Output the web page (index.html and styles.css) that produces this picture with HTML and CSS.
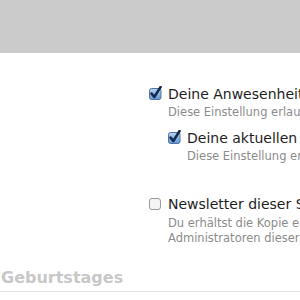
FILE: index.html
```html
<html lang="de">

<head>
	<meta charset="UTF-8" />
	<meta name="viewport" content="width=device-width, initial-scale=1.0" />
	<title>Einstellungen</title>
	<link rel="stylesheet" href="styles.css">
</head>

<body>
	<header class="top-bar"></header>
	<main class="settings">
		<div class="option">
			<svg class="option__box" viewBox="0 0 14 14" width="14" height="14">
				<defs>
					<linearGradient id="boxFill" x1="0" y1="0" x2="0" y2="1">
						<stop offset="0" stop-color="#b9d5f2" />
						<stop offset="1" stop-color="#5e98d6" />
					</linearGradient>
				</defs>
				<rect x="0.5" y="2.5" width="11.5" height="11" rx="2" fill="url(#boxFill)" stroke="#50739f" />
				<path d="M2.6 7.6 L5.3 11 L11.6 1" fill="none" stroke="#16294b" stroke-width="2.5" stroke-linecap="round" stroke-linejoin="round" />
			</svg>
			<div class="option__text">
				<p class="option__title">Deine Anwesenheit im Chat anzeigen</p>
				<p class="option__hint">Diese Einstellung erlaubt anderen Mitgliedern</p>
			</div>
		</div>
		<div class="option option--nested">
			<svg class="option__box" viewBox="0 0 14 14" width="14" height="14">
				<rect x="0.5" y="2.5" width="11.5" height="11" rx="2" fill="url(#boxFill)" stroke="#50739f" />
				<path d="M2.6 7.6 L5.3 11 L11.6 1" fill="none" stroke="#16294b" stroke-width="2.5" stroke-linecap="round" stroke-linejoin="round" />
			</svg>
			<div class="option__text">
				<p class="option__title">Deine aktuellen Aktivitäten anzeigen</p>
				<p class="option__hint">Diese Einstellung erlaubt anderen Mitgliedern</p>
			</div>
		</div>
		<div class="option option--spaced">
			<svg class="option__box" viewBox="0 0 14 14" width="14" height="14">
				<rect x="0.5" y="2.5" width="11" height="11" rx="2.5" fill="#f4f4f4" stroke="#9a9a9a" />
			</svg>
			<div class="option__text">
				<p class="option__title">Newsletter dieser Seite empfangen</p>
				<p class="option__hint option__hint--first">Du erhältst die Kopie einer E-Mail, die die</p>
				<p class="option__hint">Administratoren dieser Seite versenden</p>
			</div>
		</div>
	</main>
	<h2 class="section-title">Geburtstages</h2>
</body>

</html>
```
FILE: styles.css
```css
html, body{
  margin: 0;
  height: 100%;
  overflow: hidden;
  background-color: #fff;
  font-family: "DejaVu Sans", Verdana, sans-serif;
}

.top-bar{
  height: 53px;
  background-color: #cbcbcb;
}

.settings{
  padding-left: 149px;
  margin-top: 33px;
  white-space: nowrap;
}

.option{
  display: grid;
  grid-template-columns: 19px 1fr;
  margin-bottom: 10px;
}

.option--nested{
  margin-left: 19px;
}

.option--spaced{
  margin-top: 32px;
}

.option__box{
  display: block;
  margin-top: 0;
}

.option__text p{
  margin: 0;
}

.option__title{
  font-size: 14px;
  line-height: 16px;
  color: #1e1e1e;
}

.option__hint{
  font-size: 11.5px;
  line-height: 15px;
  color: #8c8c8c;
  margin-top: 3px !important;
}

.option__hint--first{
  margin-top: 4px !important;
}

.option__hint--first + .option__hint{
  margin-top: 0 !important;
}

.section-title{
  margin: 23px 0 0 0;
  padding: 0 0 4px 1px;
  font-size: 16px;
  line-height: 18px;
  font-weight: bold;
  color: #c8c8c8;
  border-bottom: 1px solid #e2e2e2;
}
```
